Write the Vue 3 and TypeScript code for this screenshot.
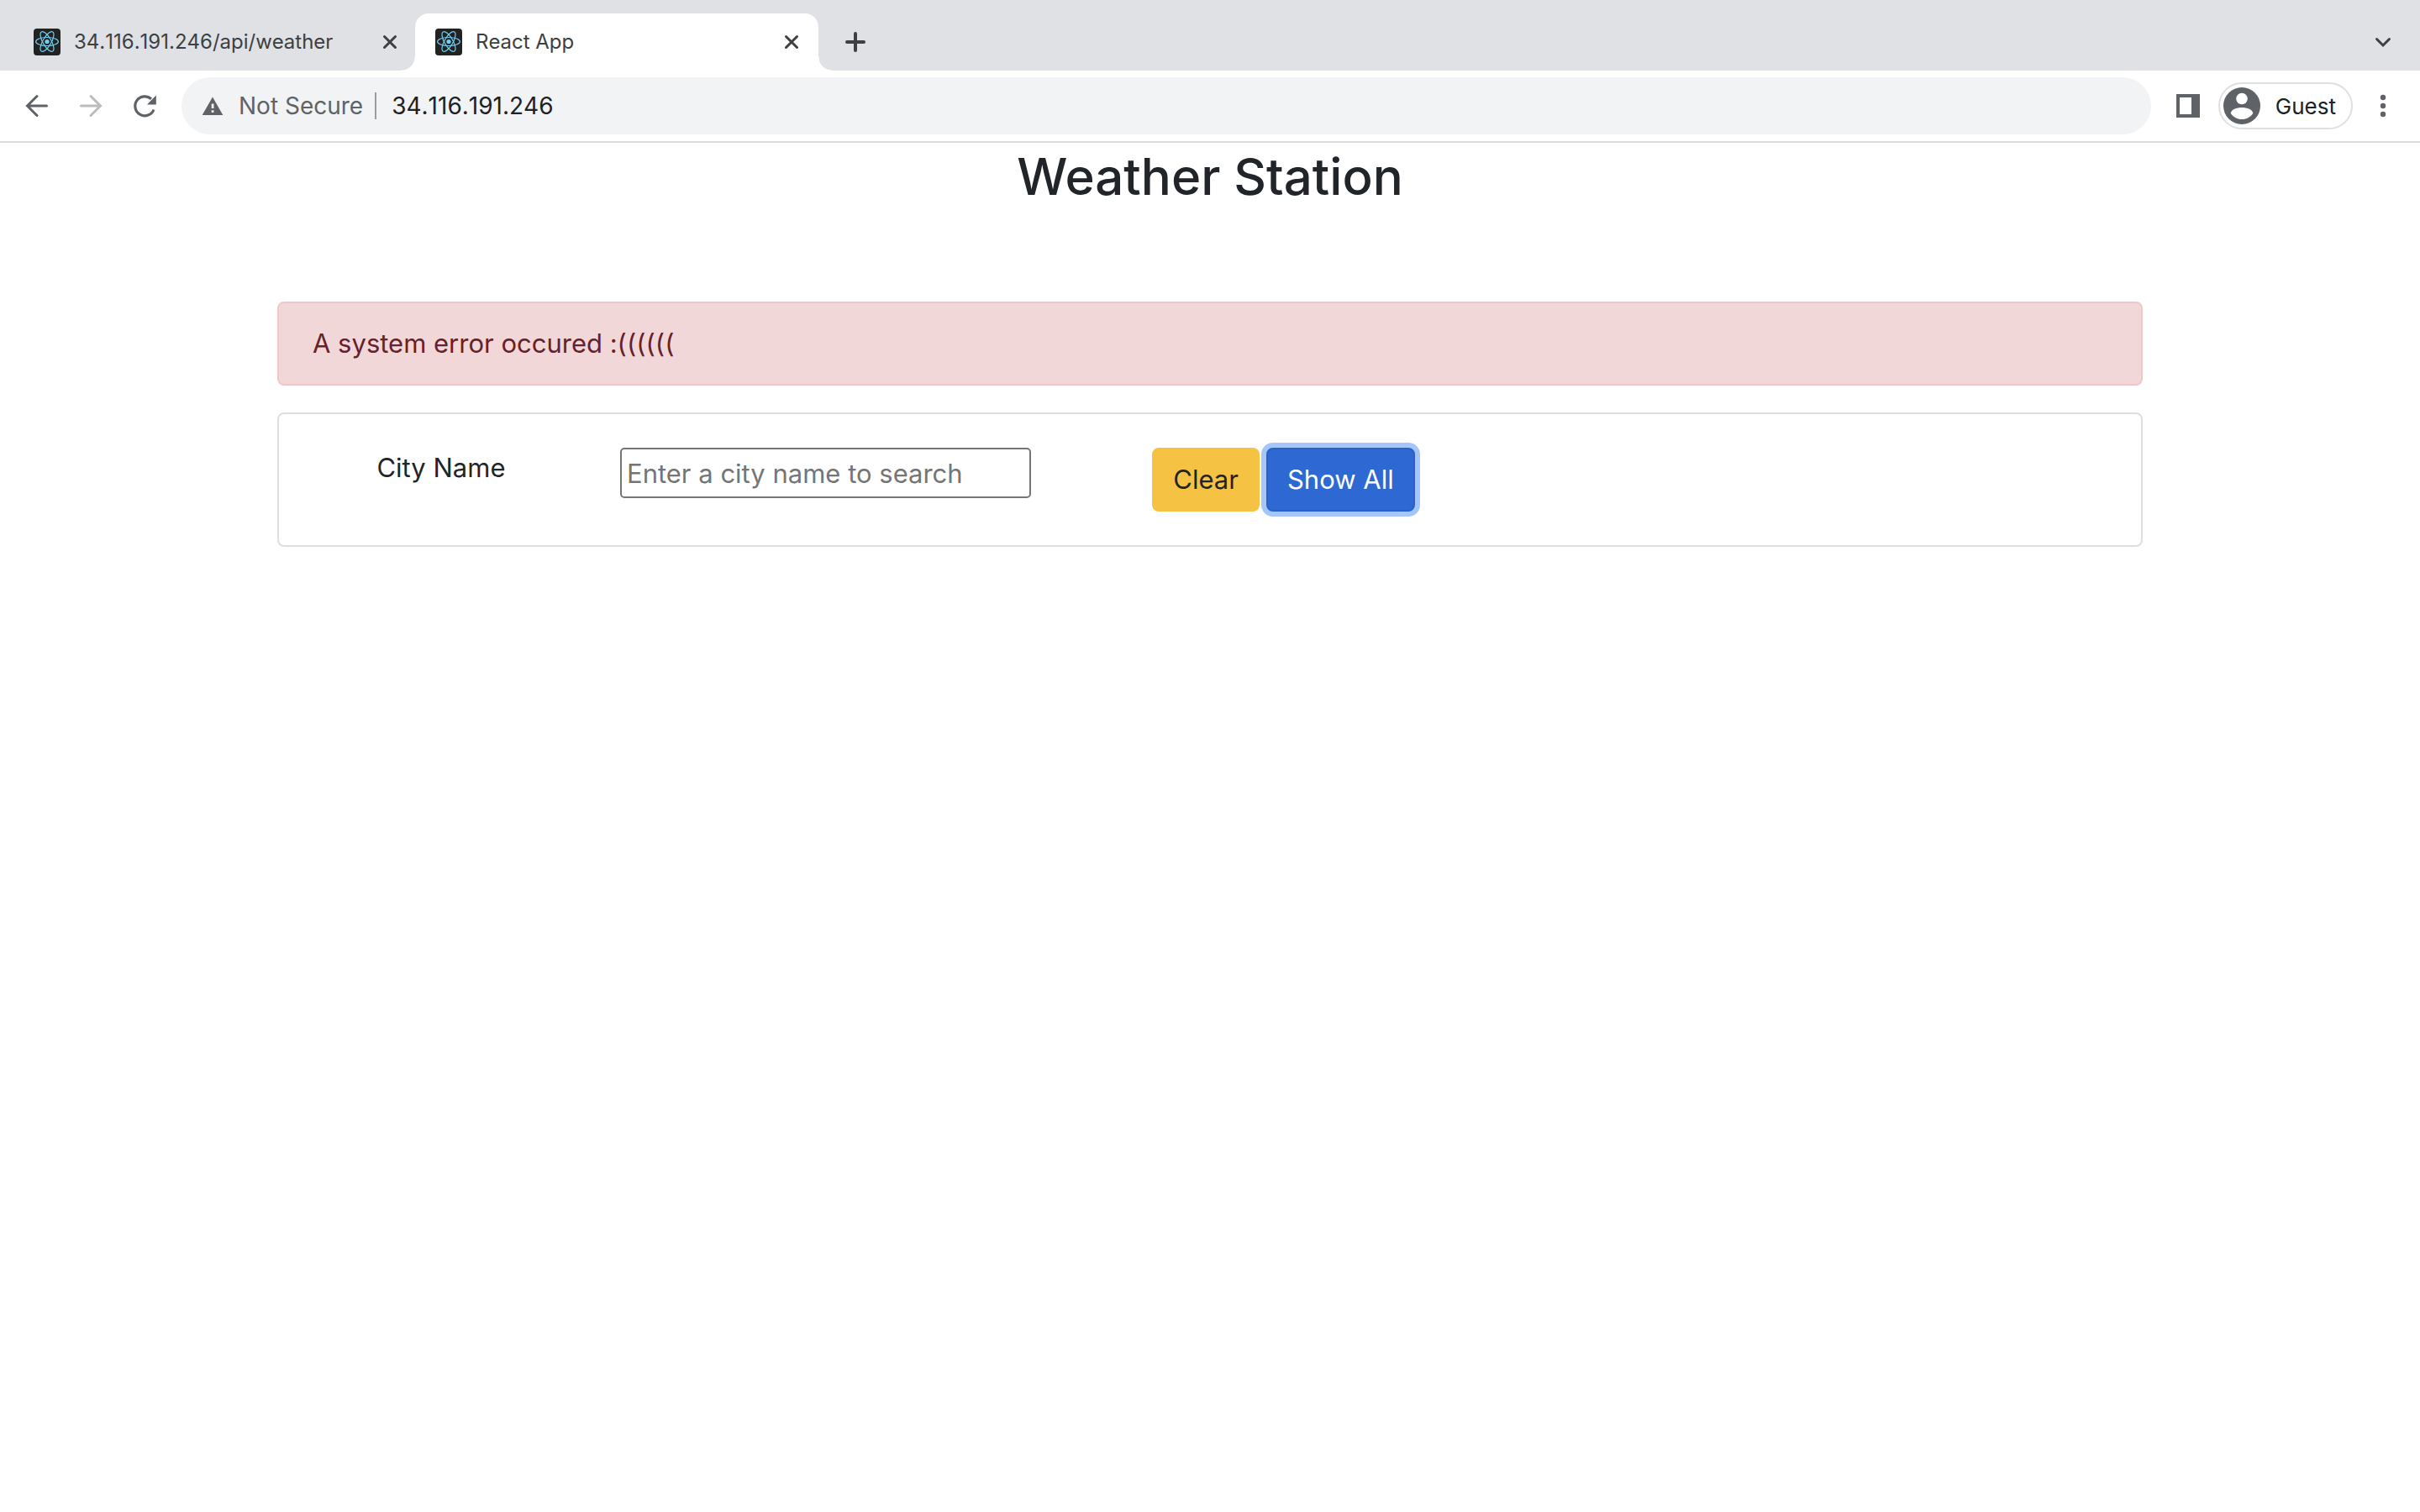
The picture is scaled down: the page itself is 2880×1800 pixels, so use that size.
<script setup lang="ts">
import { ref } from 'vue'

interface Tab {
  title: string
  active: boolean
}

const tabs: Tab[] = [
  { title: '34.116.191.246/api/weather', active: false },
  { title: 'React App', active: true },
]

const address = ref('34.116.191.246')
const city = ref('')
const errorMessage = 'A system error occured :(((((('
</script>

<template>
  <div class="browser">
    <header class="chrome">
      <div class="tab-strip">
        <div v-for="tab in tabs" :key="tab.title" class="tab" :class="{ active: tab.active }">
          <svg class="favicon" viewBox="0 0 32 32" aria-hidden="true">
            <rect width="32" height="32" rx="4" fill="#222222" />
            <g fill="none" stroke="#6fd0f2" stroke-width="1.2">
              <ellipse cx="16" cy="15.5" rx="13.4" ry="5" />
              <ellipse cx="16" cy="15.5" rx="13.4" ry="5" transform="rotate(60 16 15.5)" />
              <ellipse cx="16" cy="15.5" rx="13.4" ry="5" transform="rotate(120 16 15.5)" />
            </g>
            <circle cx="16" cy="15.5" r="2.6" fill="#6fd0f2" />
          </svg>
          <span class="tab-title">{{ tab.title }}</span>
          <button class="icon-button" type="button" aria-label="Close tab">
            <svg width="32" height="32" viewBox="0 0 32 32">
              <path d="M9.5 9.5l13 13M22.5 9.5l-13 13" class="dark-stroke" />
            </svg>
          </button>
        </div>
        <button class="icon-button new-tab" type="button" aria-label="New tab">
          <svg width="32" height="32" viewBox="0 0 32 32">
            <path d="M16 6v20M6 16h20" class="dark-stroke thick" />
          </svg>
        </button>
        <button class="icon-button tab-search" type="button" aria-label="Search tabs">
          <svg width="32" height="32" viewBox="0 0 32 32">
            <path d="M8.5 12.5l7.5 7.5l7.5-7.5" class="dark-stroke" />
          </svg>
        </button>
      </div>

      <div class="toolbar">
        <nav class="nav-buttons" aria-label="Browser navigation">
          <button class="icon-button" type="button" aria-label="Back">
            <svg width="32" height="32" viewBox="0 0 32 32">
              <path d="M27.5 16H5.5M16 4.5L4.5 16L16 27.5" class="grey-stroke" />
            </svg>
          </button>
          <button class="icon-button" type="button" aria-label="Forward" disabled>
            <svg width="32" height="32" viewBox="0 0 32 32">
              <path d="M4.5 16h22M16 4.5L27.5 16L16 27.5" class="grey-stroke faded" />
            </svg>
          </button>
          <button class="icon-button" type="button" aria-label="Reload">
            <svg width="32" height="32" viewBox="0 0 32 32">
              <path d="M27 20.5A11.5 11.5 0 1 1 24 7.8" fill="none" stroke="#5f6368" stroke-width="3.2" />
              <path d="M29.8 3.5V14.4H19z" fill="#5f6368" />
            </svg>
          </button>
        </nav>

        <div class="omnibox">
          <button class="security" type="button">
            <svg width="26" height="24" viewBox="0 0 26 24" aria-hidden="true">
              <path d="M13 1.5L25.3 23H0.7z" fill="#5f6368" />
              <path d="M11.7 9.5h2.8v5.5h-2.8zM11.7 17.2h2.8v2.8h-2.8z" fill="#f1f3f4" />
            </svg>
            <span>Not Secure</span>
          </button>
          <input v-model="address" class="address" type="text" aria-label="Address" spellcheck="false" />
        </div>

        <button class="icon-button" type="button" aria-label="Side panel">
          <svg width="32" height="32" viewBox="0 0 32 32">
            <path d="M2 2h28v28H2zM6 6v20h14V6z" fill="#5f6368" fill-rule="evenodd" />
          </svg>
        </button>
        <button class="profile" type="button">
          <svg width="44" height="44" viewBox="0 0 44 44" aria-hidden="true">
            <circle cx="22" cy="22" r="22" fill="#5f6368" />
            <circle cx="22" cy="13.5" r="6.8" fill="#ffffff" />
            <path d="M8.8 31C8.8 26.5 16 24 22 24s13.2 2.5 13.2 7C32.5 35.3 27.5 38 22 38S11.5 35.3 8.8 31z" fill="#ffffff" />
          </svg>
          <span>Guest</span>
        </button>
        <button class="icon-button" type="button" aria-label="Menu">
          <svg width="32" height="32" viewBox="0 0 32 32" fill="#5f6368">
            <circle cx="16" cy="6" r="3.2" />
            <circle cx="16" cy="16" r="3.2" />
            <circle cx="16" cy="26" r="3.2" />
          </svg>
        </button>
      </div>
    </header>

    <main class="page">
      <h2 class="heading">Weather Station</h2>
      <div class="alert" role="alert">{{ errorMessage }}</div>
      <form class="card" @submit.prevent>
        <label class="label" for="city">City Name</label>
        <div class="cell">
          <input id="city" v-model="city" class="city" type="text" placeholder="Enter a city name to search" />
        </div>
        <div class="cell actions">
          <button class="btn clear" type="button" @click="city = ''">Clear</button>
          <button class="btn show-all" type="button">Show All</button>
        </div>
      </form>
    </main>
  </div>
</template>

<style>
body {
  margin: 0;
  background: #ffffff;
}
</style>

<style scoped>
.browser,
.browser * {
  box-sizing: border-box;
}

.browser {
  font-family: Inter, "Liberation Sans", sans-serif;
  color: #212529;
}

button,
input {
  font-family: inherit;
  margin: 0;
}

.icon-button {
  display: flex;
  flex: none;
  padding: 0;
  border: 0;
  background: none;
}

.tab-strip {
  display: flex;
  align-items: flex-end;
  height: 84px;
  padding: 0 28px 0 14px;
  background: #dfe1e5;
}

.tab {
  position: relative;
  display: flex;
  align-items: center;
  gap: 16px;
  width: 480px;
  height: 68px;
  padding: 0 16px 0 24px;
  border-radius: 16px 16px 0 0;
  font-size: 24px;
  font-kerning: none;
  line-height: 32px;
  color: #3c4043;
}

.tab:first-child {
  padding-left: 26px;
  padding-right: 14px;
}

.tab.active {
  background: #ffffff;
}

.tab.active::before,
.tab.active::after {
  content: "";
  position: absolute;
  bottom: 0;
  width: 16px;
  height: 16px;
}

.tab.active::before {
  right: 100%;
  background: radial-gradient(circle at 0 0, transparent 15px, #ffffff 16px);
}

.tab.active::after {
  left: 100%;
  background: radial-gradient(circle at 100% 0, transparent 15px, #ffffff 16px);
}

.favicon {
  flex: none;
  width: 32px;
  height: 32px;
}

.tab-title {
  flex: 1;
  white-space: nowrap;
}

.dark-stroke {
  fill: none;
  stroke: #3c4043;
  stroke-width: 3;
  stroke-linecap: round;
}

.dark-stroke.thick {
  stroke-width: 4;
}

.new-tab {
  margin: 0 0 18px 28px;
}

.tab-search {
  margin: 0 0 18px auto;
}

.toolbar {
  display: flex;
  align-items: center;
  gap: 20px;
  height: 86px;
  padding: 0 28px;
  border-bottom: 2px solid #dcdddd;
  background: #ffffff;
}

.nav-buttons {
  display: flex;
  gap: 32px;
  margin-right: 8px;
}

.grey-stroke {
  fill: none;
  stroke: #5f6368;
  stroke-width: 3;
  stroke-linecap: round;
}

.grey-stroke.faded {
  stroke: #babcbe;
}

.omnibox {
  display: flex;
  flex: 1;
  align-items: center;
  height: 68px;
  margin-right: 8px;
  padding: 0 24px;
  border-radius: 34px;
  background: #f1f3f4;
}

.security {
  display: flex;
  align-items: center;
  gap: 18px;
  height: 32px;
  padding: 0 14px 0 0;
  border: 0;
  border-right: 2px solid #9a9da0;
  background: none;
  font-size: 28px;
  color: #5f6368;
  white-space: nowrap;
}

.address {
  flex: 1;
  min-width: 0;
  padding: 0 18px;
  border: 0;
  background: none;
  font-size: 28px;
  font-kerning: none;
  color: #202124;
  outline: 0;
}

.profile {
  display: flex;
  align-items: center;
  gap: 18px;
  height: 56px;
  padding: 0 18px 0 4px;
  border: 2px solid #dfe0e1;
  border-radius: 28px;
  background: #ffffff;
  font-size: 26px;
  color: #202124;
}

.page {
  width: 100%;
  max-width: 2280px;
  margin: 0 auto;
  padding: 0 30px;
}

.heading {
  margin: 0 0 109px;
  font-size: 60px;
  font-weight: 500;
  line-height: 80px;
  text-align: center;
}

.alert {
  margin-bottom: 32px;
  padding: 24px 40px;
  border: 2px solid #efc7cb;
  border-radius: 8px;
  background: #f2d7d9;
  font-size: 31px;
  line-height: 48px;
  color: #66212a;
}

.card {
  display: grid;
  grid-template-columns: 2fr 3fr 3fr 4fr;
  align-items: start;
  padding: 40px 10px;
  border: 2px solid #dfdfdf;
  border-radius: 8px;
  font-size: 31px;
  line-height: 48px;
}

.label {
  text-align: center;
}

.cell {
  min-width: 0;
  padding: 0 30px;
}

.city {
  display: block;
  width: 100%;
  height: 60px;
  padding: 2px 6px;
  border: 2px solid #767676;
  border-radius: 5px;
  background: #ffffff;
  font-size: 31px;
  color: #212529;
}

.city::placeholder {
  color: #757575;
  opacity: 1;
}

.actions {
  display: flex;
  justify-content: center;
  gap: 8px;
  padding-right: 38px;
}

.btn {
  height: 76px;
  padding: 0 23px;
  border: 2px solid transparent;
  border-radius: 8px;
  font-size: 31px;
  line-height: 48px;
  white-space: nowrap;
}

.clear {
  border-color: #f5c244;
  background: #f5c244;
  color: #212529;
}

.show-all {
  border-color: #2a60c8;
  background: #2d68d3;
  color: #ffffff;
  box-shadow: 0 0 0 6px #a4c6fb;
}
</style>
